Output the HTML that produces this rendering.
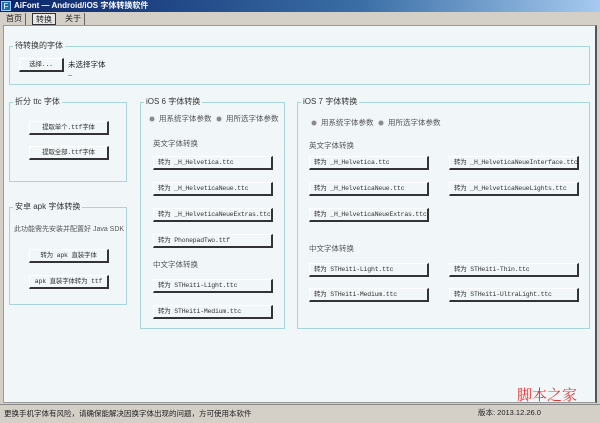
<!DOCTYPE html>
<html><head><meta charset="utf-8"><style>
*{box-sizing:border-box;margin:0;padding:0}
body{width:600px;height:422px;overflow:hidden;background:#d4d0c8;font-family:"Liberation Sans","Noto Sans CJK SC",sans-serif;font-size:8px;color:#222;position:relative}
.a{position:absolute;white-space:nowrap}
.title{left:0;top:0;width:600px;height:12px;background:linear-gradient(90deg,#0a246a,#3a6ea5 60%,#a6caf0);color:#fff;font-weight:bold;font-size:8px;line-height:12px;padding-left:14px}
.logo{left:1px;top:1px;width:10px;height:10px;background:#1c6fb5;color:#fff;font-size:8px;line-height:10px;text-align:center;border:1px solid #9cf}
.tab{top:13px;height:12px;font-size:8px;line-height:11px;padding:0 3px;border-right:1px solid #666}
.content{left:3px;top:25px;width:594px;height:378px;background:#f1f7f9;border:1px solid #999;border-right:2px solid #555}
.g{border:1px solid #a8d4da}
.gl{background:#f1f7f9;font-size:8px;line-height:8px;padding:0 2px;color:#333}
.btn{height:14px;border-right:2px solid #333;border-bottom:2px solid #333;border-top:1px solid #fff;border-left:1px solid #fff;background:#f1f7f9;font-size:6.5px;line-height:11px;padding-left:4px;font-family:"Liberation Mono","Noto Sans CJK SC",monospace;color:#333;letter-spacing:-0.2px;overflow:hidden}
.c{text-align:center;padding-left:0}
.t{font-size:7.5px;line-height:8px;color:#555}
.r{width:6px;height:6px;border-radius:50%;background:radial-gradient(#999,#666);border:1px solid #ccc}
.status{left:0;top:404px;width:600px;height:18px;background:#d4d0c8;font-size:7.5px;line-height:18px;padding-left:4px;border-top:1px solid #888}
</style></head><body>
<div class="a title">AiFont — Android/iOS 字体转换软件</div>
<div class="a logo">F</div>
<div class="a tab" style="left:3px">首页</div>
<div class="a tab" style="left:32px;border:1px solid #333;background:#e8e8e8">转换</div>
<div class="a tab" style="left:62px">关于</div>
<div class="a content"></div>

<div class="a g" style="left:9px;top:46px;width:581px;height:39px"></div>
<div class="a gl" style="left:13px;top:42px">待转换的字体</div>
<div class="a btn c" style="left:19px;top:58px;width:45px">选择...</div>
<div class="a t" style="left:68px;top:61px;color:#222">未选择字体</div>
<div class="a t" style="left:68px;top:71px">–</div>

<div class="a g" style="left:9px;top:102px;width:118px;height:80px"></div>
<div class="a gl" style="left:13px;top:98px">折分 ttc 字体</div>
<div class="a btn c" style="left:29px;top:121px;width:80px">提取单个.ttf字体</div>
<div class="a btn c" style="left:29px;top:146px;width:80px">提取全部.ttf字体</div>

<div class="a g" style="left:9px;top:207px;width:118px;height:98px"></div>
<div class="a gl" style="left:13px;top:203px">安卓 apk 字体转换</div>
<div class="a t" style="left:14px;top:226px;font-size:7px">此功能需先安装并配置好 Java SDK</div>
<div class="a btn c" style="left:29px;top:249px;width:80px">转为 apk 直装字体</div>
<div class="a btn c" style="left:29px;top:275px;width:80px">apk 直装字体转为 ttf</div>

<div class="a g" style="left:140px;top:102px;width:145px;height:227px"></div>
<div class="a gl" style="left:144px;top:98px">iOS 6 字体转换</div>
<div class="a r" style="left:149px;top:116px"></div><div class="a t" style="left:159px;top:115px">用系统字体参数</div>
<div class="a r" style="left:216px;top:116px"></div><div class="a t" style="left:226px;top:115px">用所选字体参数</div>
<div class="a t" style="left:153px;top:140px">英文字体转换</div>
<div class="a btn" style="left:153px;top:156px;width:120px">转为 _H_Helvetica.ttc</div>
<div class="a btn" style="left:153px;top:182px;width:120px">转为 _H_HelveticaNeue.ttc</div>
<div class="a btn" style="left:153px;top:208px;width:120px">转为 _H_HelveticaNeueExtras.ttc</div>
<div class="a btn" style="left:153px;top:234px;width:120px">转为 PhonepadTwo.ttf</div>
<div class="a t" style="left:153px;top:261px">中文字体转换</div>
<div class="a btn" style="left:153px;top:279px;width:120px">转为 STHeiti-Light.ttc</div>
<div class="a btn" style="left:153px;top:305px;width:120px">转为 STHeiti-Medium.ttc</div>

<div class="a g" style="left:297px;top:102px;width:293px;height:227px"></div>
<div class="a gl" style="left:301px;top:98px">iOS 7 字体转换</div>
<div class="a r" style="left:311px;top:120px"></div><div class="a t" style="left:321px;top:119px">用系统字体参数</div>
<div class="a r" style="left:378px;top:120px"></div><div class="a t" style="left:388px;top:119px">用所选字体参数</div>
<div class="a t" style="left:309px;top:142px">英文字体转换</div>
<div class="a btn" style="left:309px;top:156px;width:120px">转为 _H_Helvetica.ttc</div>
<div class="a btn" style="left:449px;top:156px;width:130px">转为 _H_HelveticaNeueInterface.ttc</div>
<div class="a btn" style="left:309px;top:182px;width:120px">转为 _H_HelveticaNeue.ttc</div>
<div class="a btn" style="left:449px;top:182px;width:130px">转为 _H_HelveticaNeueLights.ttc</div>
<div class="a btn" style="left:309px;top:208px;width:120px">转为 _H_HelveticaNeueExtras.ttc</div>
<div class="a t" style="left:309px;top:245px">中文字体转换</div>
<div class="a btn" style="left:309px;top:263px;width:120px">转为 STHeiti-Light.ttc</div>
<div class="a btn" style="left:449px;top:263px;width:130px">转为 STHeiti-Thin.ttc</div>
<div class="a btn" style="left:309px;top:288px;width:120px">转为 STHeiti-Medium.ttc</div>
<div class="a btn" style="left:449px;top:288px;width:130px">转为 STHeiti-UltraLight.ttc</div>

<div class="a" style="left:517px;top:387px;color:#e33;font-size:15px;line-height:16px;font-family:'Noto Serif CJK SC',serif">脚本之家</div>
<div class="a status">更换手机字体有风险，请确保能解决因换字体出现的问题，方可使用本软件</div>
<div class="a" style="left:478px;top:404px;font-size:7.5px;line-height:18px">版本: 2013.12.26.0</div>
</body></html>
